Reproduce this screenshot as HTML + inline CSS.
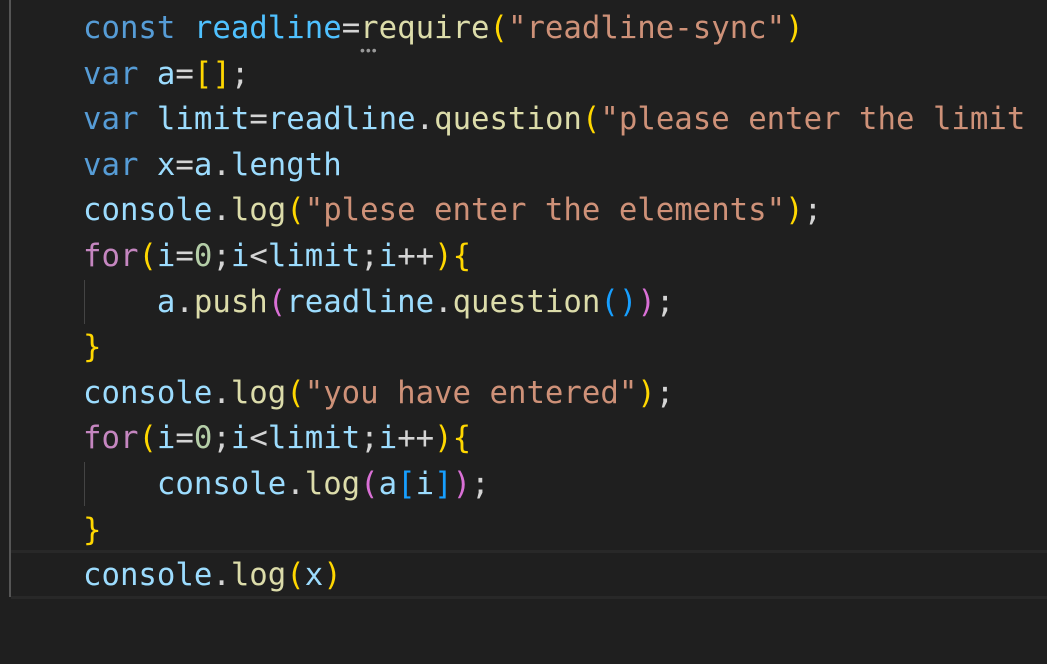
<!DOCTYPE html>
<html><head><meta charset="utf-8"><style>
html,body{margin:0;padding:0;background:#1f1f1f;width:1047px;height:664px;overflow:hidden}
.bar{position:absolute;left:9px;top:0;width:2px;height:597px;background:#555}
.cur{position:absolute;left:11px;right:0;top:550px;height:43px;border-top:3px solid #282828;border-bottom:3px solid #282828}
.guide{position:absolute;left:84px;width:1px;background:#444}
.code{position:absolute;left:83px;top:6px;font-family:"DejaVu Sans Mono","Liberation Mono",monospace;font-size:30.7px;line-height:45.6px;white-space:pre;color:#d4d4d4}
.k{color:#569cd6}.c{color:#4fc1ff}.v{color:#9cdcfe}.f{color:#dcdcaa}.s{color:#ce9178}.p{color:#c586c0}.n{color:#b5cea8}
.b1{color:#ffd700}.b2{color:#da70d6}.b3{color:#179fff}
.dots{position:absolute;left:360px;top:42px;color:#999;font-size:14px;font-family:"Liberation Sans",sans-serif;letter-spacing:1px}
</style></head><body>
<div class="bar"></div>
<div class="cur"></div>
<div class="guide" style="top:280px;height:44px"></div>
<div class="guide" style="top:462px;height:44px"></div>
<div class="code"><span class="k">const</span> <span class="c">readline</span>=<span class="f">require</span><span class="b1">(</span><span class="s">"readline-sync"</span><span class="b1">)</span>
<span class="k">var</span> <span class="v">a</span>=<span class="b1">[]</span>;
<span class="k">var</span> <span class="v">limit</span>=<span class="v">readline</span>.<span class="f">question</span><span class="b1">(</span><span class="s">"please enter the limit</span>
<span class="k">var</span> <span class="v">x</span>=<span class="v">a</span>.<span class="v">length</span>
<span class="v">console</span>.<span class="f">log</span><span class="b1">(</span><span class="s">"plese enter the elements"</span><span class="b1">)</span>;
<span class="p">for</span><span class="b1">(</span><span class="v">i</span>=<span class="n">0</span>;<span class="v">i</span>&lt;<span class="v">limit</span>;<span class="v">i</span>++<span class="b1">){</span>
    <span class="v">a</span>.<span class="f">push</span><span class="b2">(</span><span class="v">readline</span>.<span class="f">question</span><span class="b3">()</span><span class="b2">)</span>;
<span class="b1">}</span>
<span class="v">console</span>.<span class="f">log</span><span class="b1">(</span><span class="s">"you have entered"</span><span class="b1">)</span>;
<span class="p">for</span><span class="b1">(</span><span class="v">i</span>=<span class="n">0</span>;<span class="v">i</span>&lt;<span class="v">limit</span>;<span class="v">i</span>++<span class="b1">){</span>
    <span class="v">console</span>.<span class="f">log</span><span class="b2">(</span><span class="v">a</span><span class="b3">[</span><span class="v">i</span><span class="b3">]</span><span class="b2">)</span>;
<span class="b1">}</span>
<span class="v">console</span>.<span class="f">log</span><span class="b1">(</span><span class="v">x</span><span class="b1">)</span></div>
<div class="dots">•••</div>
</body></html>
